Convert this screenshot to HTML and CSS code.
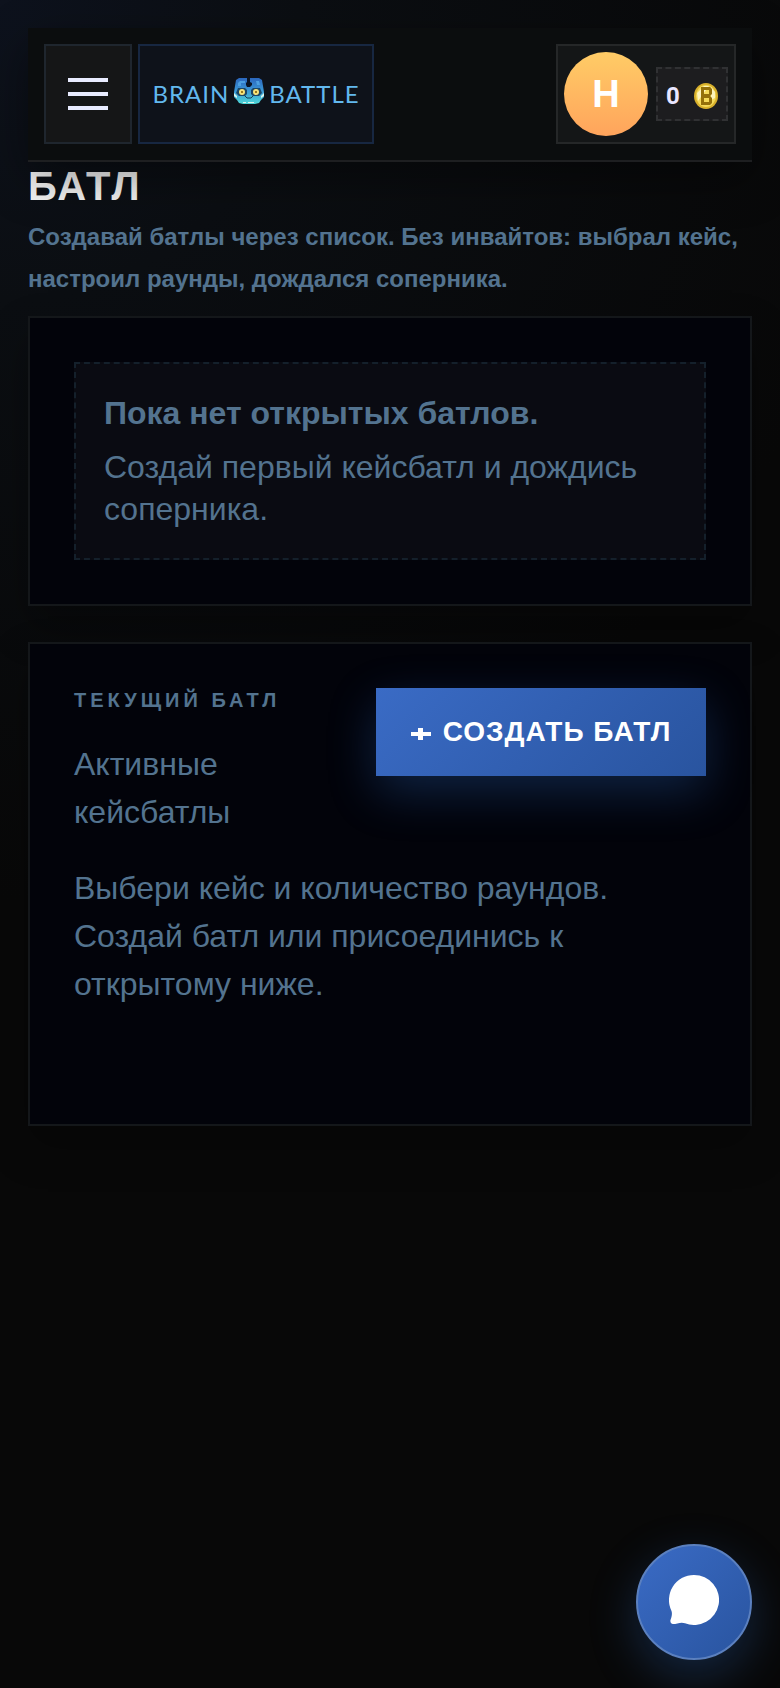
FILE: index.html
```
<!DOCTYPE html>
<html lang="ru">

<head>
    <meta charset="UTF-8">
    <meta name="viewport" content="width=device-width, initial-scale=1.0">
    <title>Brain Battle</title>
    <link rel="stylesheet" href="styles.css">
</head>

<body>

    <header class="topbar">
        <button class="menu-btn" type="button" aria-label="Меню">
            <span></span>
            <span></span>
            <span></span>
        </button>
        <a class="logo" href="#">
            <span>BRAIN</span>
            <svg class="logo-icon" viewBox="0 0 30 26" aria-hidden="true">
                <defs>
                    <linearGradient id="frog" x1="0" y1="0" x2="0" y2="1">
                        <stop offset="0" stop-color="#2b66bd" />
                        <stop offset="0.5" stop-color="#3b98d6" />
                        <stop offset="1" stop-color="#4fd8d8" />
                    </linearGradient>
                </defs>
                <path d="M5 0h20l3 2 1 6 1 6v5l-3 3-2 3-4 1H9l-4-1-2-3-3-3v-5l1-6 1-6z" fill="url(#frog)" />
                <path d="M6 3h5v2H7v3H4V5zM22 3h3l1 4h-3z" fill="#4c9fe0" />
                <path d="M13 0h3v4l2 1v2l-2 2h-3l-1-2V5l1-1z" fill="#0b1524" />
                <path d="M4 10h7l2 2v4l-2 2H5l-3-3zM19 10h7l2 5-3 3h-6l-2-2v-4z" fill="#1c4767" />
                <circle cx="8" cy="14" r="3" fill="#f5e27a" />
                <circle cx="22" cy="14" r="3" fill="#f5e27a" />
                <path d="M7 13h2v2H7zM21 13h2v2h-2z" fill="#9c7a20" />
                <path d="M11 18l2 2h4l2-2" fill="none" stroke="#12405c" />
                <path d="M0 15l3 3v2l-3-2zM30 15l-3 3v2l3-2zM9 24h3v1H9zM14 24h6v1h-6z" fill="#d9f5ee" />
            </svg>
            <span>BATTLE</span>
        </a>
        <div class="user">
            <div class="avatar">Н</div>
            <div class="balance">
                <span>0</span>
                <svg class="coin" viewBox="0 0 24 26" aria-hidden="true">
                    <ellipse cx="12" cy="13" rx="12" ry="13" fill="#d8b02c" />
                    <ellipse cx="12" cy="13" rx="10" ry="11" fill="#f5da58" />
                    <path d="M3 10l7-7h5L4 18zM17 4l4 5v6l-4 2z" fill="#fdf3ba" />
                    <path d="M7 4h9l2 2v5l-2 2 2 2v5l-2 2H7zM10 7v4h5V7zM10 15v4h5v-4z" fill="#94700a" fill-rule="evenodd" />
                </svg>
            </div>
        </div>
    </header>

    <main>
        <h1>БАТЛ</h1>
        <p class="subtitle">Создавай батлы через список. Без инвайтов: выбрал кейс, настроил раунды, дождался соперника.</p>

        <section class="card">
            <div class="empty">
                <strong>Пока нет открытых батлов.</strong>
                <p>Создай первый кейсбатл и дождись соперника.</p>
            </div>
        </section>

        <section class="card current">
            <div class="current-head">
                <div class="current-title">
                    <h2>Текущий батл</h2>
                    <p>Активные кейсбатлы</p>
                </div>
                <button class="create-btn" type="button">
                    <svg class="plus" viewBox="0 0 20 12" aria-hidden="true">
                        <path d="M0 4h7V0h5v4h8v4h-8v4H7V8H0z" fill="currentColor" />
                    </svg>
                    Создать батл
                </button>
            </div>
            <p>Выбери кейс и количество раундов. Создай батл или присоединись к открытому ниже.</p>
            <div class="battle-list"></div>
        </section>
    </main>

    <button class="chat-btn" type="button" aria-label="Чат">
        <svg viewBox="0 0 50 50" aria-hidden="true">
            <path d="M25 0a25 25 0 1 1-9 48.300C12 46.500 8 49 4 49c-2 0-3-2-2.500-4C2.500 42 3.500 39 2.500 36A25 25 0 0 1 25 0z" fill="#fff" />
        </svg>
    </button>

</body>

</html>
```
FILE: styles.css
```
* {
    box-sizing: border-box;
    margin: 0;
    padding: 0;
}

body {
    min-height: 100vh;
    padding: 28px;
    font-family: "Liberation Sans", Arial, sans-serif;
    font-size: 32px;
    line-height: 48px;
    color: #53738f;
    background: radial-gradient(circle at 0 0, #0d121d 0, #0b0e12 300px, #080808 900px) #080808;
}

button {
    font: inherit;
    cursor: pointer;
}

/* Header */
.topbar {
    position: relative;
    z-index: 1;
    display: flex;
    gap: 6px;
    padding: 16px;
    background: #0b0d0e;
    border-bottom: 2px solid #1e1f21;
    box-shadow: 0 16px 48px rgba(0, 0, 0, 0.4);
}

.menu-btn {
    display: flex;
    flex-direction: column;
    align-items: center;
    justify-content: center;
    gap: 10px;
    width: 88px;
    height: 100px;
    background: #151617;
    border: 2px solid #1f262e;
}

.menu-btn span {
    width: 40px;
    height: 4px;
    background: #e8ebff;
}

.logo {
    display: flex;
    align-items: center;
    justify-content: center;
    gap: 5px;
    width: 236px;
    font-family: Lato, sans-serif;
    font-size: 24px;
    letter-spacing: 1px;
    color: #62b8ee;
    text-decoration: none;
    background: #0e121a;
    border: 2px solid #172741;
}

.logo-icon {
    width: 30px;
    height: 26px;
    margin-bottom: 6px;
}

.user {
    display: flex;
    align-items: center;
    justify-content: space-between;
    width: 180px;
    margin-left: auto;
    padding: 0 6px;
    background: #141617;
    border: 2px solid #252728;
}

.avatar {
    width: 84px;
    height: 84px;
    font-size: 38px;
    font-weight: bold;
    line-height: 84px;
    text-align: center;
    color: #fff;
    background: linear-gradient(180deg, #ffcc66, #ffa45c);
    border-radius: 50%;
}

.balance {
    display: flex;
    align-items: center;
    justify-content: space-between;
    width: 72px;
    height: 54px;
    padding: 4px 8px 0;
    font-family: Roboto, sans-serif;
    font-size: 24px;
    font-weight: bold;
    color: #e8e6ff;
    background: #1d1d1f;
    border: 2px dashed #303133;
}

.coin {
    width: 24px;
    height: 26px;
}

/* Page */
h1 {
    margin-bottom: 6px;
    font-size: 40px;
    line-height: 48px;
    letter-spacing: 2px;
    color: #f5f5f5;
}

.subtitle {
    margin-bottom: 16px;
    font-size: 24px;
    font-weight: bold;
    line-height: 42px;
}

.card {
    padding: 44px;
    background: #02030a;
    border: 2px solid #14171a;
    box-shadow: 0 20px 40px rgba(0, 0, 0, 0.3);
}

.card + .card {
    margin-top: 36px;
}

.empty {
    display: flex;
    flex-direction: column;
    gap: 12px;
    padding: 28px;
    line-height: 42px;
    background: #0a0b12;
    border: 2px dashed #14202b;
}

.current {
    display: flex;
    flex-direction: column;
    gap: 28px;
}

.current-head {
    display: flex;
    align-items: flex-start;
    justify-content: space-between;
    gap: 28px;
}

.current-title {
    display: flex;
    flex: 1;
    flex-direction: column;
    gap: 28px;
}

h2 {
    font-size: 20px;
    line-height: 24px;
    letter-spacing: 4px;
    text-transform: uppercase;
}

.create-btn {
    display: flex;
    flex-shrink: 0;
    align-items: center;
    justify-content: center;
    gap: 12px;
    width: 330px;
    height: 88px;
    font-size: 28px;
    font-weight: bold;
    letter-spacing: 1px;
    text-transform: uppercase;
    color: #fff;
    background: linear-gradient(135deg, #3a6bc5, #29549f);
    border: none;
    box-shadow: 0 16px 48px rgba(45, 110, 200, 0.3);
}

.plus {
    width: 20px;
    height: 12px;
    margin-top: 4px;
}

.battle-list {
    min-height: 44px;
}

/* Chat */
.chat-btn {
    position: fixed;
    right: 28px;
    bottom: 28px;
    display: flex;
    align-items: center;
    justify-content: center;
    width: 116px;
    height: 116px;
    background: linear-gradient(135deg, #3a6bc5, #29549f);
    border: 2px solid #5b80bf;
    border-radius: 50%;
    box-shadow: 0 16px 48px rgba(45, 110, 200, 0.3);
}

.chat-btn svg {
    width: 50px;
    height: 50px;
    margin-bottom: 4px;
}
```
